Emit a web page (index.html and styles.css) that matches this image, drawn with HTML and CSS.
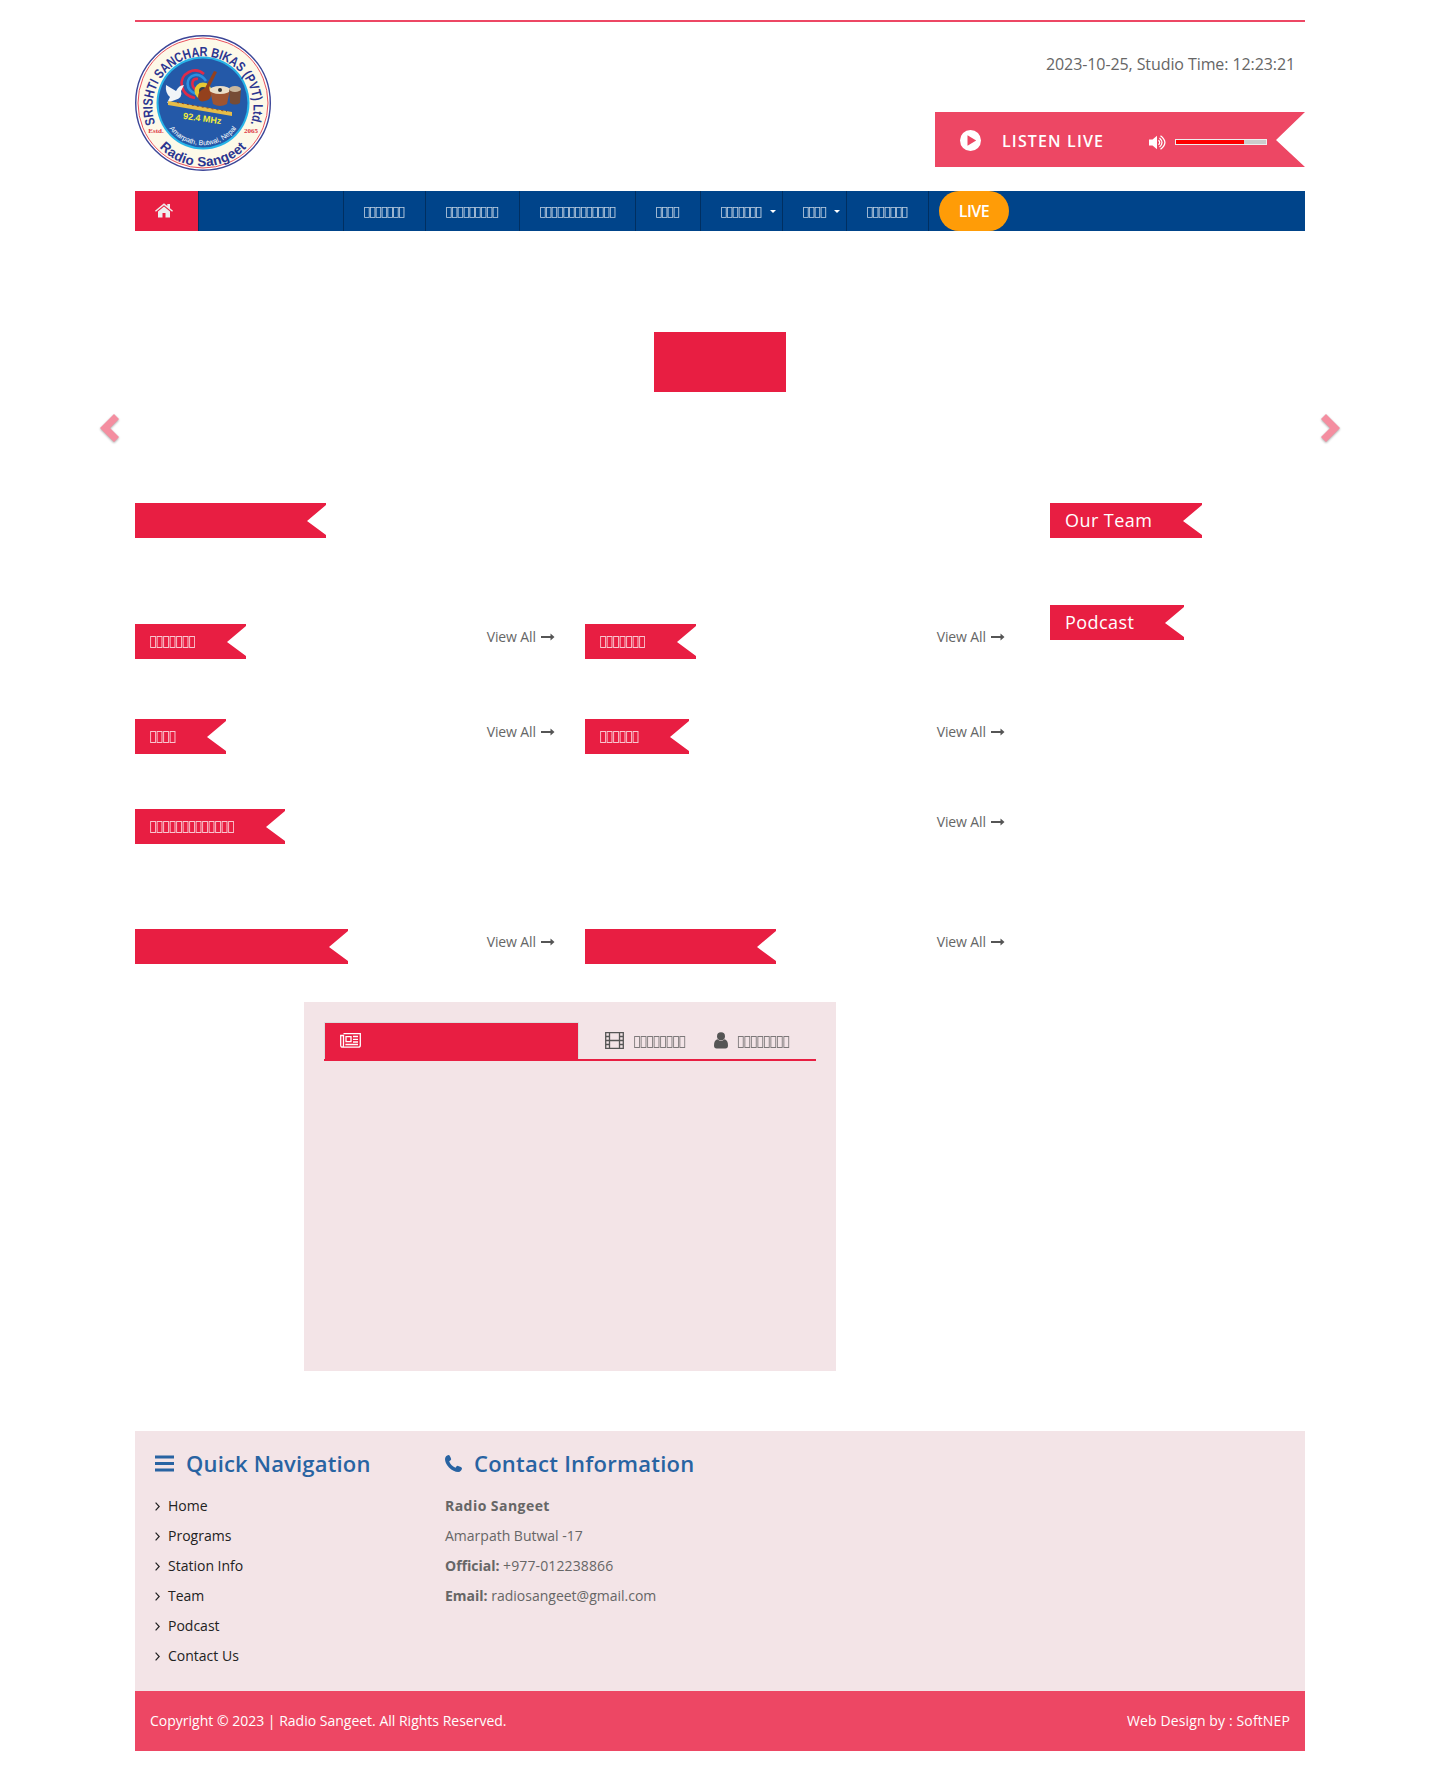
FILE: index.html
```html
<!DOCTYPE html>
<html lang="ne">
<head>
<meta charset="utf-8">
<title>Radio Sangeet</title>
<link rel="stylesheet" href="styles.css">
</head>
<body>
<svg class="defs" width="0" height="0" aria-hidden="true">
  <symbol id="arrow" viewBox="0 0 14 8"><path d="M0 3h9.5V.6L13.5 4 9.500 7.400V5H0z"/></symbol>
  <symbol id="angle" viewBox="0 0 5 9"><path d="M.6.600 4.200 4.500.6 8.400" fill="none" stroke="currentColor" stroke-width="1.200"/></symbol>
</svg>
<div class="container">
  <header class="header">
    <svg class="logo" viewBox="0 0 136 136">
      <defs>
        <path id="ring-top" d="M20.500 89A50.500 50.500 0 1 1 115.500 89"/>
        <path id="ring-bottom" d="M14 97.500A60 60 0 0 0 122 97.500"/>
        <path id="ring-inner" d="M28 81A42 42 0 0 0 108 81"/>
      </defs>
      <circle cx="68" cy="68" r="67.300" fill="#fff" stroke="#3b4597" stroke-width="1.400"/>
      <circle cx="68" cy="68" r="65" fill="#fdf9e8" stroke="#e8505c" stroke-width="1"/>
      <circle cx="68" cy="68" r="46.500" fill="#28b4e8"/>
      <circle cx="68" cy="68" r="44.500" fill="#2459a8"/>
      <g fill="none" stroke-width="2.600">
        <path d="M60 63C45 60 42 43 54 37q8-4 15 2" stroke="#e02a48"/>
        <path d="M61 59c-11-4-11-17-1-19 6-1 9 3 11 6" stroke="#2b8fe0"/>
        <path d="M61 55c-6-5-4-12 2-11" stroke="#e02a48"/>
      </g>
      <circle cx="68" cy="56" r="8.500" fill="#e6c933"/>
      <circle cx="68" cy="56" r="4" fill="#333c4c"/>
      <path d="M79 36l3 1-8 16q5 8-1 12-9 4-10-3 0-6 7-9z" fill="#94411d"/>
      <path d="M31 50l10 6q3-6 8-6l-3 6q2 7-6 9l-8 3 3-6q-5-4-4-12z" fill="#f1f4f7"/>
      <path d="M33 66l64 11v4L33 70z" fill="#e7bd48"/>
      <path d="M42 67.500l50 9" stroke="#8f451e" stroke-dasharray="2 3"/>
      <path d="M75 55h20l-3 14q-7 4-14 0z" fill="#9e5432"/><ellipse cx="85" cy="55" rx="10.500" ry="4" fill="#eadfca"/><circle cx="85" cy="55" r="2" fill="#333"/>
      <path d="M94 54h12l-1 14q-5 3-10 0z" fill="#764c35"/><ellipse cx="100" cy="54" rx="6" ry="3" fill="#c9b79d"/>
      <text class="logo-freq" x="67" y="86.500" transform="rotate(8 67 85)">92.4 MHz</text>
      <text class="logo-ring"><textPath href="#ring-top" startOffset="50%" textLength="193" lengthAdjust="spacingAndGlyphs">SRISHTI SANCHAR BIKAS (PVT) Ltd.</textPath></text>
      <text class="logo-name"><textPath href="#ring-bottom" startOffset="50%">Radio Sangeet</textPath></text>
      <text class="logo-place"><textPath href="#ring-inner" startOffset="50%">Amarpath, Butwal, Nepal</textPath></text>
      <text class="logo-year" x="21" y="98">Estd.</text>
      <text class="logo-year" x="116" y="98">2065</text>
    </svg>
    <div class="header-side">
      <p class="clock">2023-10-25, Studio Time: 12:23:21</p>
      <div class="listen">
        <svg class="play" viewBox="0 0 21 21"><circle cx="10.500" cy="10.500" r="10.500" fill="#fff"/><path d="M7.500 5.200v10.600l8.700-5.300z" fill="#ed4764"/></svg>
        <span class="listen-label">LISTEN LIVE</span>
        <svg class="volume" viewBox="0 0 17 15"><path d="M0 4.500h3.500L8 .8v13.400l-4.500-3.700H0z" fill="#fff"/><g fill="none" stroke="#fff" stroke-width="1.300"><path d="M9.500 5.200q2.400 2.300 0 4.600M10.500 2.900q5 4.600 0 9.200M11.500.7q8.800 6.800 0 13.600"/></g></svg>
        <span class="meter"><span class="meter-fill" style="width:76%"></span></span>
      </div>
    </div>
  </header>

  <nav class="nav">
    <a class="nav-home"><svg viewBox="0 0 18 15" width="18" height="15"><path d="M9 3.500 3 8.500V14.500h4.500V10h3v4.500H15V8.500z"/><path d="M9 .3 12.300 3V1H15v4.200l3 2.500-.9 1.100L9 2.200.9 8.800 0 7.700z"/></svg></a>
    <span class="nav-gap"></span>
    <a class="nav-item w82"><span class="boxes">▯▯▯▯▯▯▯</span></a>
    <a class="nav-item w94"><span class="boxes">▯▯▯▯▯▯▯▯▯</span></a>
    <a class="nav-item w116"><span class="boxes">▯▯▯▯▯▯▯▯▯▯▯▯▯</span></a>
    <a class="nav-item w65"><span class="boxes">▯▯▯▯</span></a>
    <a class="nav-item w82"><span class="boxes">▯▯▯▯▯▯▯</span><i class="caret"></i></a>
    <a class="nav-item w64"><span class="boxes">▯▯▯▯</span><i class="caret"></i></a>
    <a class="nav-item w82"><span class="boxes">▯▯▯▯▯▯▯</span></a>
    <a class="nav-live">LIVE</a>
  </nav>

  <section class="slider">
    <svg class="slide-arrow prev" viewBox="0 0 19 28"><path d="M14 0 19 5 10 14l9 9-5 5L0 14z"/></svg>
    <div class="slide-block"></div>
    <svg class="slide-arrow next" viewBox="0 0 19 28"><path d="M5 0 0 5l9 9-9 9 5 5L19 14z"/></svg>
  </section>

  <div class="columns">
    <main class="main">
      <div class="row row-first"><div class="cell"><h2 class="ribbon w191"></h2></div></div>
      <div class="row row-a">
        <div class="cell"><h2 class="ribbon w111"><span class="boxes">▯▯▯▯▯▯▯</span></h2><a class="view-all">View All <svg><use href="#arrow"/></svg></a></div>
        <div class="cell"><h2 class="ribbon w111"><span class="boxes">▯▯▯▯▯▯▯</span></h2><a class="view-all">View All <svg><use href="#arrow"/></svg></a></div>
      </div>
      <div class="row row-b">
        <div class="cell"><h2 class="ribbon w91"><span class="boxes">▯▯▯▯</span></h2><a class="view-all">View All <svg><use href="#arrow"/></svg></a></div>
        <div class="cell"><h2 class="ribbon w104"><span class="boxes">▯▯▯▯▯▯</span></h2><a class="view-all">View All <svg><use href="#arrow"/></svg></a></div>
      </div>
      <div class="row row-c">
        <div class="cell"><h2 class="ribbon w150"><span class="boxes">▯▯▯▯▯▯▯▯▯▯▯▯▯</span></h2><a class="view-all">View All <svg><use href="#arrow"/></svg></a></div>
      </div>
      <div class="row row-d">
        <div class="cell"><h2 class="ribbon w213"></h2><a class="view-all">View All <svg><use href="#arrow"/></svg></a></div>
        <div class="cell"><h2 class="ribbon w191"></h2><a class="view-all">View All <svg><use href="#arrow"/></svg></a></div>
      </div>
      <section class="panel">
        <div class="tabs">
          <a class="tab active"><svg width="21" height="15" viewBox="0 0 21 15" fill="none" stroke="currentColor" stroke-width="1.300"><path d="M3.500.7h16.800v11.500q0 2-2 2H2.700q-2 0-2-2V2.500h2.800v9.700q0 1.500-1.200 2"/><path d="M6 3.600h5v5H6zM13 3.500h5M13 6.300h5M13 9h5M5.400 11.500H18"/></svg></a>
          <a class="tab tab-film"><svg width="19" height="17" viewBox="0 0 19 17" fill="none" stroke="currentColor" stroke-width="1.300"><path d="M.7.700h17.600v15.600H.7zM4.500.700v15.600M14.500.700v15.600M4.500 8.500h10M.7 4.500h3.800M.7 8.500h3.800M.7 12.500h3.800M14.500 4.500h3.800M14.500 8.500h3.800M14.500 12.500h3.800"/></svg><span class="boxes">▯▯▯▯▯▯▯▯</span></a>
          <a class="tab tab-user"><svg width="14" height="17" viewBox="0 0 14 17" fill="currentColor"><circle cx="7" cy="4.200" r="4"/><path d="M3.500 7.200Q7 10.400 10.500 7.200 14 8 14 13.500q0 3-2.600 3H2.600Q0 16.500 0 13.500 0 8 3.500 7.200z"/></svg><span class="boxes">▯▯▯▯▯▯▯▯</span></a>
        </div>
      </section>
    </main>
    <aside class="aside">
      <h2 class="ribbon w152">Our Team</h2>
      <h2 class="ribbon w134">Podcast</h2>
    </aside>
  </div>

  <footer class="footer">
    <section class="foot-nav">
      <h3><svg width="19" height="17" viewBox="0 0 19 17" fill="currentColor"><path d="M0 .500h19v3H0zM0 7h19v3H0zM0 13.500h19v3H0z"/></svg>Quick Navigation</h3>
      <ul>
        <li><svg><use href="#angle"/></svg>Home</li>
        <li><svg><use href="#angle"/></svg>Programs</li>
        <li><svg><use href="#angle"/></svg>Station Info</li>
        <li><svg><use href="#angle"/></svg>Team</li>
        <li><svg><use href="#angle"/></svg>Podcast</li>
        <li><svg><use href="#angle"/></svg>Contact Us</li>
      </ul>
    </section>
    <section class="foot-contact">
      <h3><svg width="17" height="17" viewBox="0 0 17 17" fill="currentColor"><path d="M3.700 0Q5 .2 6.200 4.300q-.2.900-2 2Q5.500 10.500 10.500 12.800q1.200-1.900 2-2Q17 12.200 17 13.200q-.4 3.300-3.800 3.800Q8.500 17 4 12.600 0 8.300 0 4 .3.500 3.700 0z"/></svg>Contact Information</h3>
      <p><b class="station">Radio Sangeet</b></p>
      <p>Amarpath Butwal -17</p>
      <p><b>Official:</b> <span class="phone">+977-012238866</span></p>
      <p><b>Email:</b> radiosangeet@gmail.com</p>
    </section>
  </footer>
  <div class="copyright"><span>Copyright © 2023 | Radio Sangeet. All Rights Reserved.</span><span class="credit">Web Design by : SoftNEP</span></div>
</div>
</body>
</html>
```
FILE: styles.css
```css
* { box-sizing: border-box; }
body { margin: 0; background: #fff; color: #666; font: 14px/20px "Open Sans", sans-serif; }
h2, h3, p, ul { margin: 0; padding: 0; font-weight: 400; list-style: none; }
svg { display: block; flex: none; }
.defs { position: absolute; }
.container { width: 1170px; margin: 0 auto; padding-top: 20px; }
.boxes { margin-left: -1px; font-family: "DejaVu Sans", sans-serif; font-size: 14px; letter-spacing: -1.9px; opacity: .75; }

.header { display: flex; justify-content: space-between; height: 171px; border-top: 2px solid #ed4764; }
.logo { width: 136px; height: 136px; margin-top: 13px; }
.logo text { text-anchor: middle; font-family: "Liberation Sans", sans-serif; font-weight: 700; }
.logo .logo-ring { font-size: 13.5px; fill: #2c3590; }
.logo .logo-name { font-size: 13.5px; fill: #2c3590; letter-spacing: .3px; }
.logo .logo-place { font-size: 7px; font-weight: 400; fill: #fff; }
.logo .logo-freq { font-size: 9px; fill: #f3ee3b; }
.logo .logo-year { font: 700 7px "Liberation Serif", serif; fill: #dc3545; }
.header-side { display: flex; flex-direction: column; align-items: flex-end; padding-top: 32px; }
.clock { padding-right: 10px; font-size: 16px; letter-spacing: -.09px; }
.listen { display: flex; align-items: center; width: 370px; height: 55px; margin-top: 38px; padding: 2px 0 0 25px; background: #ed4764; clip-path: polygon(0 0, 100% 0, 341px 28px, 100% 100%, 0 100%); }
.play { width: 21px; height: 21px; }
.listen-label { width: 147px; margin-left: 21px; color: #fff; font-size: 16px; font-weight: 600; letter-spacing: 1.150px; white-space: nowrap; }
.volume { width: 17px; height: 15px; margin-top: 4px; }
.meter { width: 92px; height: 6px; margin: 3px 0 0 9px; border: 1px solid #eee; background: #ccc; }
.meter-fill { display: block; height: 4px; background: #f00; }

.nav { display: flex; height: 40px; background: #00448a; color: #fff; line-height: 40px; }
.nav-home { display: flex; width: 64px; padding: 12px 0 0 20px; background: #e81e42; border-right: 1px solid #002f61; fill: #eee; }
.nav-gap { width: 145px; border-right: 1px solid #002f61; }
.nav-item { display: flex; align-items: center; padding-left: 20px; border-right: 1px solid #002f61; white-space: nowrap; }
.caret { margin-left: 9px; border: 3px solid transparent; border-top-color: #fff; border-bottom: 0; }
.nav-live { width: 70px; margin-left: 10px; border-radius: 20px; background: #ff9c07; font-size: 16px; font-weight: 600; letter-spacing: -.5px; text-align: center; }
.w82 { width: 82px; } .w94 { width: 94px; } .w116 { width: 116px; } .w65 { width: 65px; } .w64 { width: 64px; }

.slider { display: flex; justify-content: space-between; height: 272px; margin: 0 -35px; padding-top: 101px; }
.slide-block { width: 132px; height: 60px; background: #e81e42; }
.slide-arrow { width: 19px; height: 28px; margin-top: 82px; fill: #f48ea0; filter: drop-shadow(0 1px 1px rgba(0, 0, 0, .35)); }

.columns { display: flex; gap: 45px; height: 928px; }
.main { width: 870px; }
.row { display: flex; gap: 30px; }
.row-first { height: 121px; }
.row-a { height: 95px; }
.row-b { height: 90px; }
.row-c { height: 120px; }
.row-d { height: 73px; }
.cell { display: flex; flex: 1; justify-content: space-between; }
.ribbon { height: 35px; padding-left: 15px; background: #e81e42; color: #fff; font-size: 18px; line-height: 35px; letter-spacing: .45px; white-space: nowrap; clip-path: polygon(0 0, 100% 0, 100% 2px, calc(100% - 19px) 18px, 100% 32px, 100% 100%, 0 100%); }
.ribbon .boxes { display: block; font-size: 15.5px; line-height: 34px; letter-spacing: -2.03px; }
.w191 { width: 191px; } .w111 { width: 111px; } .w91 { width: 91px; } .w104 { width: 104px; }
.w150 { width: 150px; } .w213 { width: 213px; } .w152 { width: 152px; } .w134 { width: 134px; }
.view-all { display: flex; align-items: center; gap: 5px; height: 20px; margin-top: 3px; letter-spacing: -.1px; }
.view-all svg { width: 14px; height: 8px; fill: #555; }
.aside { display: flex; flex-direction: column; gap: 67px; }

.panel { width: 532px; height: 369px; margin-left: 169px; padding: 20px; background: #f3e4e7; }
.tabs { display: flex; height: 39px; border-bottom: 2px solid #e81e42; }
.tab { display: flex; align-items: center; gap: 10px; color: #555; }
.tab .boxes { font-size: 15.5px; letter-spacing: -2.05px; }
.tab.active { width: 255px; padding-left: 15px; padding-bottom: 2px; border: 1px solid #ddd; border-bottom: 0; background: #e81e42; color: #fff; }
.tab-film { margin-left: 26px; }
.tab-user { margin-left: 29px; }

.footer { display: flex; height: 260px; padding: 17px 20px; background: #f3e4e7; }
.foot-nav { width: 290px; color: #222; }
.footer h3 { display: flex; align-items: center; gap: 12px; height: 30px; margin-bottom: 13px; color: #2863a2; font-size: 22px; font-weight: 600; line-height: 30px; letter-spacing: .18px; white-space: nowrap; }
.footer .foot-contact h3 { letter-spacing: .25px; }
.footer li { display: flex; align-items: center; gap: 8px; height: 30px; }
.footer li svg { width: 5px; height: 9px; }
.footer p { line-height: 30px; }
.station { letter-spacing: .45px; }
.phone { letter-spacing: .12px; }
.copyright { display: flex; justify-content: space-between; height: 60px; padding: 0 15px; background: #ed4764; color: #fff; line-height: 60px; }
.credit { letter-spacing: .13px; }
```
